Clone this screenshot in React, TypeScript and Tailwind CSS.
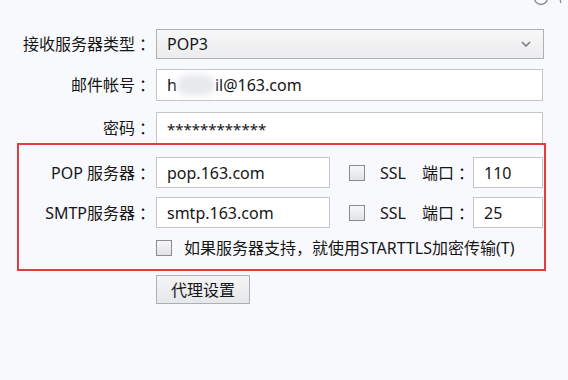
import type { ReactNode } from 'react';

function Colon() {
  return <span className="inline-block w-[16px] text-center font-['Noto_Sans_CJK_JP',sans-serif]">：</span>;
}

function Label({ text, width }: { text: string; width: string }) {
  return (
    <div className={`${width} flex justify-end items-center shrink-0 whitespace-nowrap`}>
      <span>{text}</span>
      <Colon />
    </div>
  );
}

function Box({ children, className }: { children?: ReactNode; className: string }) {
  return (
    <div className={`flex items-center pl-[10px] bg-white border border-[#c4c6c9] ${className}`}>
      {children}
    </div>
  );
}

function Check({ className = '' }: { className?: string }) {
  return (
    <div
      className={`w-[16px] h-[16px] shrink-0 border border-[#8a8c90] bg-gradient-to-b from-[#f7f7f7] to-[#e1e2e4] ${className}`}
    />
  );
}

export default function App() {
  return (
    <div className="relative w-[568px] h-[380px] overflow-hidden bg-[#f8f9fc] text-[16px] leading-none text-[#161616] font-['Noto_Sans','Noto_Sans_CJK_SC',sans-serif]">
      {/* cut-off help icon at the top edge */}
      <svg className="absolute left-[533px] top-[-10px]" width="35" height="16" viewBox="0 0 35 16">
        <circle cx="8" cy="8" r="6.5" fill="none" stroke="#8a8c90" strokeWidth="1.4" />
        <path d="M29 3 Q26 8 28 13" fill="none" stroke="#8a8c90" strokeWidth="1.3" />
      </svg>

      <div className="pt-[29px] flex flex-col">
        <div className="flex items-center">
          <Label text="接收服务器类型" width="w-[151px]" />
          <div className="ml-[5px] w-[388px] h-[30px] flex items-center justify-between pl-[10px] pr-[12px] border border-[#aeb0b3] bg-gradient-to-b from-[#f7f7f8] to-[#ececee]">
            <span>POP3</span>
            <svg width="10" height="6" viewBox="0 0 10 6">
              <path d="M1 1 L5 5 L9 1" fill="none" stroke="#76787c" strokeWidth="1.5" />
            </svg>
          </div>
        </div>

        <div className="flex items-center mt-[10px]">
          <Label text="邮件帐号" width="w-[151px]" />
          <Box className="ml-[5px] w-[387px] h-[32px]">
            <span>h</span>
            <span className="inline-block w-[38px] h-[20px] bg-[#e6e8ec] blur-[3px] rounded-full" />
            <span>il@163.com</span>
          </Box>
        </div>

        <div className="flex items-center mt-[11px]">
          <Label text="密码" width="w-[151px]" />
          <Box className="ml-[5px] w-[387px] h-[32px] items-start pt-[9px]">
            <span className="text-[15px]">************</span>
          </Box>
        </div>

        <div className="ml-[17px] -mt-px w-[529px] border-2 border-[#e53b3b] pt-[12px] pb-[13px] flex flex-col">
          <div className="flex items-center">
            <Label text="POP 服务器" width="w-[132px]" />
            <Box className="ml-[5px] w-[174px] h-[31px]">pop.163.com</Box>
            <Check className="ml-[19px]" />
            <span className="ml-[15px] w-[27px]">SSL</span>
            <span className="ml-[15px]">端口</span>
            <Colon />
            <Box className="ml-[3px] w-[70px] h-[31px] pl-[9px]">110</Box>
          </div>
          <div className="flex items-center mt-[9px]">
            <Label text="SMTP服务器" width="w-[132px]" />
            <Box className="ml-[5px] w-[174px] h-[31px]">smtp.163.com</Box>
            <Check className="ml-[19px]" />
            <span className="ml-[15px] w-[27px]">SSL</span>
            <span className="ml-[15px]">端口</span>
            <Colon />
            <Box className="ml-[3px] w-[70px] h-[31px] pl-[9px]">25</Box>
          </div>
          <div className="flex items-center mt-[11px] h-[17px]">
            <Check className="ml-[137px]" />
            <span className="ml-[12px] whitespace-nowrap">如果服务器支持，就使用STARTTLS加密传输(T)</span>
          </div>
        </div>

        <button className="mt-[4px] ml-[156px] w-[94px] h-[29px] border border-[#adafb2] bg-gradient-to-b from-[#f5f5f6] to-[#e6e7e9] text-[16px] text-[#161616]">
          代理设置
        </button>
      </div>
    </div>
  );
}
